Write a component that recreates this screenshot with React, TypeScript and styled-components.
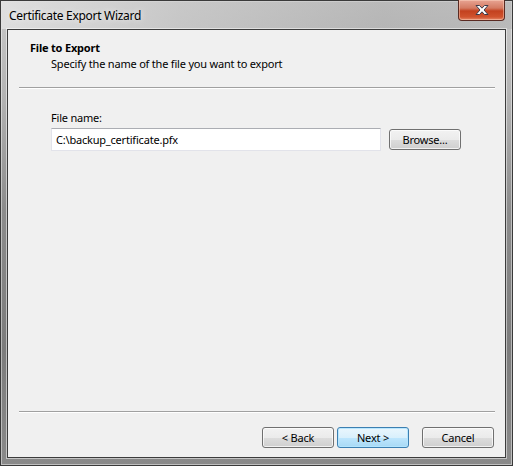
import styled, { createGlobalStyle } from "styled-components";

const GlobalStyle = createGlobalStyle`
  html, body {
    margin: 0;
    padding: 0;
    background: #ffffff;
  }
  * {
    box-sizing: border-box;
  }
`;

const App = () => {
  return (
    <>
      <GlobalStyle />
      <Window>
        <TitleBar>
          <Caption>Certificate Export Wizard</Caption>
          <CloseButton aria-label="Close">
            <svg width="16" height="12" viewBox="0 0 16 12">
              <path
                d="M2 1.5 L5.5 1.5 L8 4.2 L10.5 1.5 L14 1.5 L10 6 L14 10.5 L10.5 10.5 L8 7.8 L5.5 10.5 L2 10.5 L6 6 Z"
                fill="#ffffff"
                stroke="#3b3b4a"
                strokeWidth="1"
                strokeLinejoin="round"
              />
            </svg>
          </CloseButton>
        </TitleBar>

        <Client>
          <Header>
            <HeaderTitle>File to Export</HeaderTitle>
            <HeaderSubtitle>
              Specify the name of the file you want to export
            </HeaderSubtitle>
          </Header>
          <Separator />

          <Body>
            <Label>File name:</Label>
            <FieldRow>
              <TextBox defaultValue="C:\backup_certificate.pfx" />
              <Button>Browse...</Button>
            </FieldRow>
          </Body>

          <Separator />
          <Footer>
            <Button>&lt; Back</Button>
            <Button primary>Next &gt;</Button>
            <CancelButton>Cancel</CancelButton>
          </Footer>
        </Client>
      </Window>
    </>
  );
};

export default App;

const Window = styled.div`
  width: 513px;
  height: 466px;
  display: flex;
  flex-direction: column;
  border: 1px solid #3a3a3a;
  padding: 0 6px 7px 6px;
  font-family: "Noto Sans", "Liberation Sans", sans-serif;
  font-size: 11px;
  letter-spacing: -0.2px;
  color: #000;
  background: linear-gradient(
    180deg,
    #c9c9c9 0%,
    #b4b4b4 20%,
    #8c8c8c 45%,
    #7c7c7c 75%,
    #8a8a8a 100%
  );
  box-shadow: inset 0 0 0 1px rgba(255, 255, 255, 0.45);
`;

const TitleBar = styled.div`
  height: 28px;
  display: flex;
  align-items: flex-start;
  margin: 0 -6px;
  padding: 0 7px 0 2px;
  background: linear-gradient(
    90deg,
    rgba(225, 225, 225, 0.9) 0%,
    rgba(200, 200, 200, 0.6) 35%,
    rgba(150, 150, 150, 0.3) 75%,
    rgba(170, 170, 170, 0.4) 100%
  );
`;

const Caption = styled.div`
  padding: 6px 0 0 6px;
  font-size: 12px;
  letter-spacing: -0.3px;
  color: #000;
  text-shadow: 0 0 6px rgba(255, 255, 255, 0.9);
`;

const CloseButton = styled.div`
  margin-left: auto;
  margin-top: -1px;
  width: 47px;
  height: 21px;
  display: flex;
  align-items: center;
  justify-content: center;
  border: 1px solid #5a2a22;
  border-top: none;
  border-radius: 0 0 4px 4px;
  background: linear-gradient(
    180deg,
    #e8a493 0%,
    #d47b63 40%,
    #c3411f 55%,
    #d0532e 85%,
    #e6896a 100%
  );
  box-shadow: inset 0 0 0 1px rgba(255, 220, 200, 0.45);
`;

const Client = styled.div`
  flex: 1;
  display: flex;
  flex-direction: column;
  background: #f0f0f0;
  border: 1px solid #3c3c3c;
  box-shadow: 0 0 0 1px rgba(255, 255, 255, 0.5);
`;

const Header = styled.div`
  height: 57px;
  padding: 10px 0 0 22px;
`;

const HeaderTitle = styled.div`
  font-weight: bold;
  line-height: 16px;
`;

const HeaderSubtitle = styled.div`
  padding-left: 21px;
  line-height: 16px;
`;

const Separator = styled.div`
  margin: 0 10px 0 11px;
  height: 2px;
  border-top: 1px solid #a0a0a0;
  border-bottom: 1px solid #ffffff;
`;

const Body = styled.div`
  flex: 1;
  padding: 21px 0 0 43px;
`;

const Label = styled.div`
  line-height: 16px;
  margin-bottom: 2px;
`;

const FieldRow = styled.div`
  display: flex;
  align-items: center;
  gap: 8px;
`;

const TextBox = styled.input`
  width: 330px;
  height: 23px;
  padding: 0 4px;
  border: 1px solid #e2e3ea;
  border-top-color: #abadb3;
  background: #ffffff;
  font-family: inherit;
  font-size: 11px;
  letter-spacing: -0.2px;
  color: #000;
  outline: none;
`;

const Button = styled.div<{ primary?: boolean }>`
  width: 72px;
  height: 21px;
  display: flex;
  align-items: center;
  justify-content: center;
  border: 1px solid ${(p) => (p.primary ? "#3c7fb1" : "#707070")};
  border-radius: 3px;
  background: ${(p) =>
    p.primary
      ? "linear-gradient(180deg, #eaf6fd 0%, #d9f0fc 50%, #bee6fd 51%, #a7d9f5 100%)"
      : "linear-gradient(180deg, #f2f2f2 0%, #ebebeb 50%, #dddddd 51%, #cfcfcf 100%)"};
  box-shadow: inset 0 0 0 1px
    ${(p) => (p.primary ? "rgba(180, 230, 255, 0.9)" : "rgba(255, 255, 255, 0.7)")};
  color: #000;
`;

const CancelButton = styled(Button)`
  margin-left: 10px;
`;

const Footer = styled.div`
  display: flex;
  justify-content: flex-end;
  gap: 3px;
  padding: 14px 11px 0 0;
  height: 44px;
`;
